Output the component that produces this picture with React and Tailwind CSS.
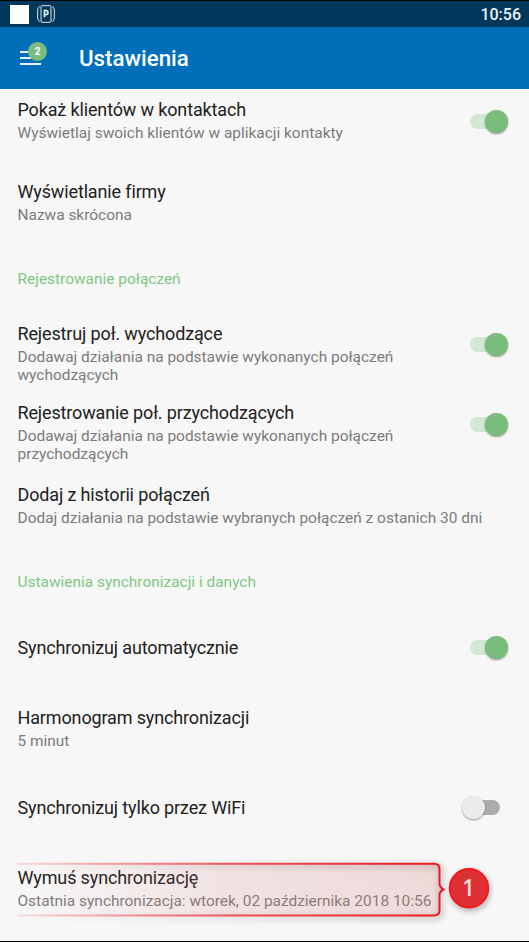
import React from 'react';

function Switch({ on }) {
  return (
    <span className="relative block h-[23px] w-[46px] shrink-0">
      <span className={`absolute left-2 top-1 block h-[15px] w-[30px] rounded-full ${on ? 'bg-[#d1e8d2]' : 'bg-[#ababab]'}`} />
      <span
        className={`absolute top-0 block size-[23px] rounded-full shadow-[0_1px_2px_rgba(0,0,0,0.38)] ${on ? 'right-0 bg-[#7abc7c]' : 'left-0 bg-[#ebebeb]'}`}
      />
    </span>
  );
}

function Title({ children }) {
  return <div className="whitespace-nowrap text-[18px] leading-[22px] tracking-[-0.14px] text-[#212121]">{children}</div>;
}

function Summary({ children }) {
  return <div className="mt-[3px] whitespace-nowrap text-[15.45px] leading-[18px] text-[#7b7b7b]">{children}</div>;
}

function Row({ size, title, children, control, controlOffset = 'pt-[21px]' }) {
  return (
    <div className={`flex justify-between pl-[17.5px] pr-[21px] ${size}`}>
      <div className="pt-2.5">
        <Title>{title}</Title>
        {children && <Summary>{children}</Summary>}
      </div>
      {control && <div className={controlOffset}>{control}</div>}
    </div>
  );
}

function Section({ size, children }) {
  return <h2 className={`pl-[17.5px] pt-4 text-[15.45px] leading-[18px] text-[#81c784] ${size}`}>{children}</h2>;
}

function Callout() {
  return (
    <svg className="absolute left-0 top-0" width="529" height="84" viewBox="0 857 529 84" fill="none">
      <defs>
        <linearGradient id="edge" gradientUnits="userSpaceOnUse" x1="17" y1="0" x2="441" y2="0">
          <stop offset="0" stopColor="#f01820" stopOpacity="0.12" />
          <stop offset="0.5" stopColor="#f01820" stopOpacity="0.7" />
          <stop offset="1" stopColor="#f01820" />
        </linearGradient>
        <linearGradient id="wash" gradientUnits="userSpaceOnUse" x1="17" y1="0" x2="441" y2="0">
          <stop offset="0" stopColor="#d47b7b" stopOpacity="0" />
          <stop offset="0.5" stopColor="#d47b7b" stopOpacity="0.17" />
          <stop offset="1" stopColor="#d47b7b" stopOpacity="0.24" />
        </linearGradient>
        <linearGradient id="shade" gradientUnits="userSpaceOnUse" x1="17" y1="0" x2="441" y2="0">
          <stop offset="0" stopColor="#000" stopOpacity="0" />
          <stop offset="1" stopColor="#000" />
        </linearGradient>
        <filter id="soft" x="-10%" y="-30%" width="120%" height="170%">
          <feGaussianBlur stdDeviation="3" />
        </filter>
      </defs>
      <path d="M17 866H436Q441 866 441 871V913Q441 918 436 918H17" stroke="url(#shade)" strokeWidth="4" opacity="0.24" filter="url(#soft)" />
      <path d="M17 863.7H434Q439.5 863.7 439.5 869V885L443.5 889.5L439.5 893V910Q439.5 915.5 434 915.5H17Z" fill="url(#wash)" />
      <path d="M17 863.7H434Q439.5 863.7 439.5 869V884Q439.5 887 443.5 889.5Q439.5 891.5 439.5 895V910Q439.5 915.5 434 915.5H17" stroke="url(#edge)" strokeWidth="2" />
      <circle cx="470" cy="891" r="20" fill="#000" opacity="0.3" filter="url(#soft)" />
      <circle cx="469" cy="888.3" r="19.3" fill="#dd3035" stroke="#fa1219" strokeWidth="1.8" />
      <text x="468.5" y="896" textAnchor="middle" fill="#f6d8d9" fontFamily="'Open Sans', sans-serif" fontWeight="600" fontSize="22.5">1</text>
    </svg>
  );
}

export default function App() {
  return (
    <div className="flex h-[942px] w-[529px] flex-col overflow-hidden border-b border-t border-black bg-[#f7f7f7] font-[Roboto,sans-serif]">
      <div className="flex h-[26px] shrink-0 items-center bg-[#00375b] pl-2.5 pr-2">
        <span className="size-[19px] bg-white" />
        <svg className="ml-2" width="18" height="18" viewBox="0 0 18 18" fill="none" stroke="#dce5ec">
          <path d="M2.8 1.5Q.7 2 .7 5V13Q.7 16 2.8 16.5M15.2 1.5Q17.3 2 17.3 5V13Q17.3 16 15.2 16.5" />
          <rect x="4" y=".7" width="10" height="16.6" rx="1" />
          <text x="9.1" y="11.8" textAnchor="middle" fill="#eef3f6" stroke="#eef3f6" strokeWidth="0.3" fontSize="8.5" fontWeight="700">P</text>
        </svg>
        <span className="ml-auto pt-0.5 text-base font-medium leading-none text-[#eef2f5]">10:56</span>
      </div>
      <header className="flex h-[62px] shrink-0 items-center bg-[#006fb9] pl-5">
        <div className="relative h-[18px] w-[21px]">
          <div className="flex flex-col gap-1 pt-0.5">
            <span className="h-0.5 bg-white/90" />
            <span className="h-0.5 bg-white/90" />
            <span className="h-0.5 bg-white/90" />
          </div>
          <span className="absolute -top-[7px] left-2 flex size-[19px] items-center justify-center rounded-full bg-[#7abc7c] text-[10px] font-bold leading-none text-white">2</span>
        </div>
        <h1 className="ml-[38px] pt-px text-[22.3px] font-medium leading-none text-white">Ustawienia</h1>
      </header>
      <main className="flex flex-col">
        <Row size="h-[82px]" title="Pokaż klientów w kontaktach" control={<Switch on />}>Wyświetlaj swoich klientów w aplikacji kontakty</Row>
        <Row size="h-[83px]" title="Wyświetlanie firmy">Nazwa skrócona</Row>
        <Section size="h-[59px]">Rejestrowanie połączeń</Section>
        <Row size="h-[79px]" title="Rejestruj poł. wychodzące" control={<Switch on />} controlOffset="pt-5">
          Dodawaj działania na podstawie wykonanych połączeń<br />wychodzących
        </Row>
        <Row size="h-[82px]" title="Rejestrowanie poł. przychodzących" control={<Switch on />}>
          Dodawaj działania na podstawie wykonanych połączeń<br />przychodzących
        </Row>
        <Row size="h-[83px]" title="Dodaj z historii połączeń">Dodaj działania na podstawie wybranych połączeń z ostanich 30 dni</Row>
        <Section size="h-[70px]">Ustawienia synchronizacji i danych</Section>
        <Row size="h-[70px]" title="Synchronizuj automatycznie" control={<Switch on />} controlOffset="pt-[9px]" />
        <Row size="h-[90px]" title="Harmonogram synchronizacji">5 minut</Row>
        <Row size="h-[70px]" title="Synchronizuj tylko przez WiFi" control={<Switch />} controlOffset="pt-[9px]" />
        <div className="relative">
          <Row size="h-[84px]" title="Wymuś synchronizację">Ostatnia synchronizacja: wtorek, 02 października 2018 10:56</Row>
          <Callout />
        </div>
      </main>
    </div>
  );
}
